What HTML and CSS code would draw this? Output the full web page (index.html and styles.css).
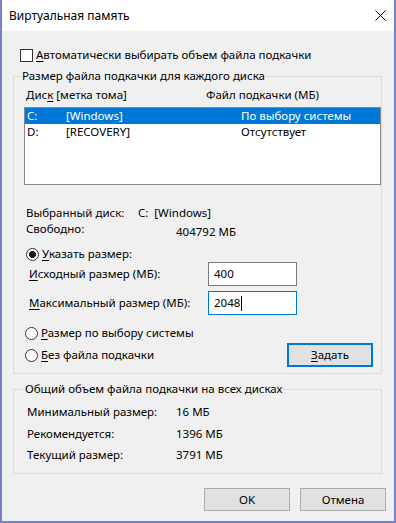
FILE: index.html
```html
<!DOCTYPE html>
<html lang="ru">
<head>
<meta charset="utf-8">
<title>Виртуальная память</title>
<link rel="stylesheet" href="styles.css">
</head>
<body>
<div class="window">
  <div class="titlebar">
    <span class="title">Виртуальная память</span>
    <svg class="close" width="11" height="11" viewBox="0 0 11 11"><path d="M0.5 0.5 L10.5 10.5 M10.5 0.5 L0.5 10.5" stroke="#000" stroke-width="1" fill="none"/></svg>
  </div>
  <div class="content">
    <div class="check-row"><span class="checkbox"></span><span class="check-label"><u>А</u>втоматически выбирать объем файла подкачки</span></div>
    <fieldset class="group group-disks">
      <legend>Размер файла подкачки для каждого диска</legend>
      <div class="list-head"><span class="col-disk">Дис<u>к</u> [метка тома]</span><span class="col-file">Файл подкачки (МБ)</span></div>
      <div class="listbox">
        <div class="list-row selected"><span>C:</span><span>[Windows]</span><span>По выбору системы</span></div>
        <div class="list-row"><span>D:</span><span>[RECOVERY]</span><span>Отсутствует</span></div>
      </div>
      <div class="info">
        <div class="info-row"><span class="info-label w1">Выбранный диск:</span><span>C:&nbsp; [Windows]</span></div>
        <div class="info-row"><span class="info-label w2">Свободно:</span><span class="free">404792 МБ</span></div>
      </div>
      <div class="radio-row first"><span class="radio checked"></span><span class="radio-label"><u>У</u>казать размер:</span></div>
      <div class="field-row"><span class="field-label"><u>И</u>сходный размер (МБ):</span><div class="textbox">400</div></div>
      <div class="field-row second"><span class="field-label"><u>М</u>аксимальный размер (МБ):</span><div class="textbox focused">2048<span class="caret"></span></div></div>
      <div class="radio-row sys"><span class="radio"></span><span class="radio-label"><u>Р</u>азмер по выбору системы</span></div>
      <div class="last-row">
        <div class="radio-row none"><span class="radio"></span><span class="radio-label"><u>Б</u>ез файла подкачки</span></div>
        <button class="btn default"><u>З</u>адать</button>
      </div>
    </fieldset>
    <fieldset class="group group-total">
      <legend>Общий объем файла подкачки на всех дисках</legend>
      <div class="total-row"><span class="total-label">Минимальный размер:</span><span>16 МБ</span></div>
      <div class="total-row r2"><span class="total-label">Рекомендуется:</span><span>1396 МБ</span></div>
      <div class="total-row r3"><span class="total-label">Текущий размер:</span><span>3791 МБ</span></div>
    </fieldset>
    <div class="buttons"><button class="btn">OK</button><button class="btn">Отмена</button></div>
  </div>
</div>
</body>
</html>
```

FILE: styles.css
```css
* { box-sizing: border-box; }
html, body { margin: 0; padding: 0; }
body {
  width: 396px;
  height: 523px;
  overflow: hidden;
  font-family: "Noto Sans", "Open Sans", sans-serif;
  font-size: 11.5px;
  line-height: 16px;
  color: #000;
  background: #fff;
}
u { text-decoration: underline; text-underline-offset: 2px; }

.window {
  width: 396px;
  height: 523px;
  border: 2px solid #7b80cc;
  border-top: none;
  background: #f0f0f0;
  display: flex;
  flex-direction: column;
}

.titlebar {
  height: 31px;
  flex: none;
  background: #fff;
  display: flex;
  align-items: center;
  padding-left: 7px;
  padding-right: 8px;
}
.title { font-size: 12px; }
.close { margin-left: auto; display: block; }

.content { padding: 0 12px 0 11px; }

.check-row {
  margin-top: 16px;
  height: 16px;
  display: flex;
  align-items: center;
  padding-left: 7px;
}
.checkbox {
  width: 13px;
  height: 13px;
  border: 1px solid #333;
  background: #fff;
  flex: none;
}
.check-label { margin-left: 3px; }

.group {
  margin: 0;
  border: 1px solid #dcdcdc;
  min-inline-size: 0;
}
.group legend {
  padding: 0 1px;
  margin-left: -3px;
  line-height: 16px;
}
.group-disks {
  margin-top: 5px;
  padding: 0 0 6px 10px;
}

.list-head {
  padding-top: 3px;
  padding-left: 2px;
  height: 19px;
  display: flex;
}
.col-disk { width: 180px; }

.listbox {
  margin-top: 4px;
  width: 357px;
  height: 78px;
  border: 1px solid #828790;
  background: #fff;
}
.list-row {
  height: 16px;
  display: grid;
  grid-template-columns: 39px 175px 1fr;
  padding-left: 2px;
  white-space: nowrap;
}
.list-row.selected { background: #0078d7; color: #fff; }

.info { margin-top: 20px; padding-left: 2px; }
.info-row { display: flex; height: 16px; }
.w1 { width: 112px; }
.w2 { width: 150px; }
.free { margin-top: 3px; }

.radio-row {
  display: flex;
  align-items: center;
  height: 16px;
}
.radio {
  width: 13px;
  height: 13px;
  border: 1px solid #333;
  border-radius: 50%;
  background: #fff;
  flex: none;
}
.radio.checked { background: radial-gradient(circle, #1a1a1a 0 3.2px, #fff 3.8px); }
.radio-label { margin-left: 3px; }
.radio-row.first { margin-top: 9px; padding-left: 2px; }
.radio-row.sys { margin-top: 10px; padding-left: 1px; }
.radio-row.none { padding-left: 1px; }

.field-row {
  display: flex;
  align-items: center;
  height: 24px;
}
.field-row.second { margin-top: 5px; }
.field-label { width: 184px; padding-left: 5px; }
.textbox {
  width: 89px;
  height: 24px;
  border: 1px solid #7a7a7a;
  background: #fff;
  padding-left: 5px;
  display: flex;
  align-items: center;
}
.textbox.focused { border-color: #0078d7; }
.caret { display: inline-block; width: 1px; height: 15px; background: #000; margin-left: 1px; }

.last-row {
  margin-top: 2px;
  height: 24px;
  display: flex;
  align-items: center;
  justify-content: space-between;
}

.btn {
  font: inherit;
  color: #000;
  background: #e1e1e1;
  border: 1px solid #adadad;
  width: 86px;
  height: 23px;
  padding: 0;
  line-height: 16px;
}
.btn.default {
  height: 24px;
  border: 2px solid #0078d7;
  margin-right: 8px;
}

.group-total {
  margin-top: 7px;
  padding: 7px 0 10px 13px;
}
.total-row { display: flex; height: 16px; }
.total-row.r2 { margin-top: 6px; }
.total-row.r3 { margin-top: 5px; }
.total-label { width: 149px; }

.buttons {
  margin-top: 14px;
  margin-right: -4px;
  display: flex;
  justify-content: flex-end;
  gap: 10px;
}
```
